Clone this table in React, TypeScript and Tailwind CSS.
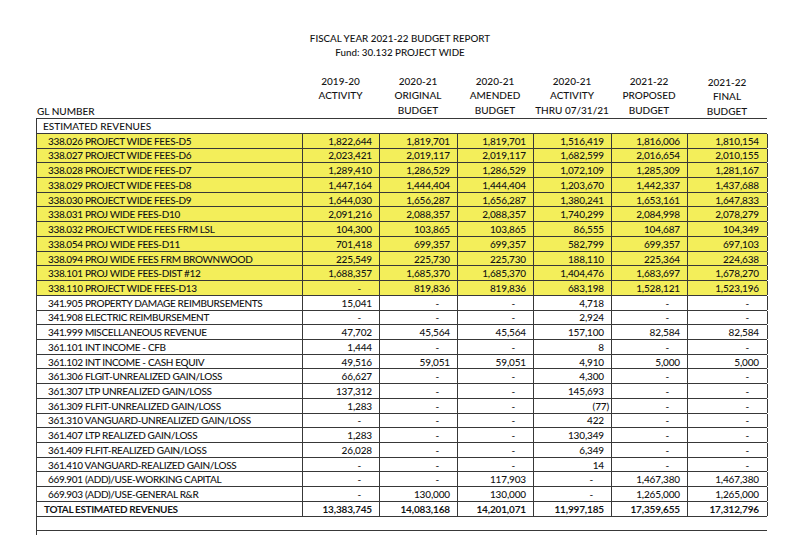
import React from "react";

type Row = { gl: string; v: string[]; yellow?: boolean; bold?: boolean };

const yellowRows: Row[] = [
  { gl: "338.026 PROJECT WIDE FEES-D5", v: ["1,822,644", "1,819,701", "1,819,701", "1,516,419", "1,816,006", "1,810,154"] },
  { gl: "338.027 PROJECT WIDE FEES-D6", v: ["2,023,421", "2,019,117", "2,019,117", "1,682,599", "2,016,654", "2,010,155"] },
  { gl: "338.028 PROJECT WIDE FEES-D7", v: ["1,289,410", "1,286,529", "1,286,529", "1,072,109", "1,285,309", "1,281,167"] },
  { gl: "338.029 PROJECT WIDE FEES-D8", v: ["1,447,164", "1,444,404", "1,444,404", "1,203,670", "1,442,337", "1,437,688"] },
  { gl: "338.030 PROJECT WIDE FEES-D9", v: ["1,644,030", "1,656,287", "1,656,287", "1,380,241", "1,653,161", "1,647,833"] },
  { gl: "338.031 PROJ WIDE FEES-D10", v: ["2,091,216", "2,088,357", "2,088,357", "1,740,299", "2,084,998", "2,078,279"] },
  { gl: "338.032 PROJECT WIDE FEES FRM LSL", v: ["104,300", "103,865", "103,865", "86,555", "104,687", "104,349"] },
  { gl: "338.054 PROJ WIDE FEES-D11", v: ["701,418", "699,357", "699,357", "582,799", "699,357", "697,103"] },
  { gl: "338.094 PROJ WIDE FEES FRM BROWNWOOD", v: ["225,549", "225,730", "225,730", "188,110", "225,364", "224,638"] },
  { gl: "338.101 PROJ WIDE FEES-DIST #12", v: ["1,688,357", "1,685,370", "1,685,370", "1,404,476", "1,683,697", "1,678,270"] },
  { gl: "338.110 PROJECT WIDE FEES-D13", v: ["-", "819,836", "819,836", "683,198", "1,528,121", "1,523,196"] },
];

const whiteRows: Row[] = [
  { gl: "341.905 PROPERTY DAMAGE REIMBURSEMENTS", v: ["15,041", "-", "-", "4,718", "-", "-"] },
  { gl: "341.908 ELECTRIC REIMBURSEMENT", v: ["-", "-", "-", "2,924", "-", "-"] },
  { gl: "341.999 MISCELLANEOUS REVENUE", v: ["47,702", "45,564", "45,564", "157,100", "82,584", "82,584"] },
  { gl: "361.101 INT INCOME - CFB", v: ["1,444", "-", "-", "8", "-", "-"] },
  { gl: "361.102 INT INCOME - CASH EQUIV", v: ["49,516", "59,051", "59,051", "4,910", "5,000", "5,000"] },
  { gl: "361.306 FLGIT-UNREALIZED GAIN/LOSS", v: ["66,627", "-", "-", "4,300", "-", "-"] },
  { gl: "361.307 LTP UNREALIZED GAIN/LOSS", v: ["137,312", "-", "-", "145,693", "-", "-"] },
  { gl: "361.309 FLFIT-UNREALIZED GAIN/LOSS", v: ["1,283", "-", "-", "(77)", "-", "-"] },
  { gl: "361.310 VANGUARD-UNREALIZED GAIN/LOSS", v: ["-", "-", "-", "422", "-", "-"] },
  { gl: "361.407 LTP REALIZED GAIN/LOSS", v: ["1,283", "-", "-", "130,349", "-", "-"] },
  { gl: "361.409 FLFIT-REALIZED GAIN/LOSS", v: ["26,028", "-", "-", "6,349", "-", "-"] },
  { gl: "361.410 VANGUARD-REALIZED GAIN/LOSS", v: ["-", "-", "-", "14", "-", "-"] },
  { gl: "669.901 (ADD)/USE-WORKING CAPITAL", v: ["-", "-", "117,903", "-", "1,467,380", "1,467,380"] },
  { gl: "669.903 (ADD)/USE-GENERAL R&R", v: ["-", "130,000", "130,000", "-", "1,265,000", "1,265,000"] },
];

const totalRow: Row = {
  gl: "TOTAL ESTIMATED REVENUES",
  v: ["13,383,745", "14,083,168", "14,201,071", "11,997,185", "17,359,655", "17,312,796"],
  bold: true,
};

const COLS = "grid grid-cols-[266px_77px_78px_76px_78px_76px_80px]";

function ValueCell({ val, last }: { val: string; last?: boolean }) {
  let pad = "pr-[7px]";
  if (val === "-") pad = "pr-[18px]";
  else if (val.startsWith("(")) pad = "pr-[2px]";
  if (last) pad = "pr-[8px]";
  return (
    <div className={`flex items-center justify-end border-r border-[#383838] tracking-[-0.15px] ${pad}`}>
      {val}
    </div>
  );
}

function DataRow({ row, yellow }: { row: Row; yellow?: boolean }) {
  return (
    <div
      className={`${COLS} h-[14.72px] border-b border-l border-[#383838] leading-none ${
        yellow ? "bg-[#f3ee5a]" : "bg-white"
      } ${row.bold ? "font-bold" : "font-medium"}`}
    >
      <div
        className={`flex items-center whitespace-nowrap border-r border-[#383838] tracking-[-0.35px] ${
          row.bold ? "pl-[7px]" : "pl-[11px]"
        }`}
      >
        {row.gl}
      </div>
      {row.v.map((val, i) => (
        <ValueCell key={i} val={val} last={i === 5 && val !== "-"} />
      ))}
    </div>
  );
}

export default function App() {
  return (
    <div
      className="relative h-[535px] w-[800px] overflow-hidden bg-white font-medium text-[#141414]"
      style={{ fontFamily: "Lato, 'Open Sans', sans-serif" }}
    >
      <div className="pt-[31px] text-center text-[9.8px] leading-[14px]">
        <div>FISCAL YEAR 2021-22 BUDGET REPORT</div>
        <div>Fund: 30.132 PROJECT WIDE</div>
      </div>

      <div className="ml-[36px] mt-[15px] text-[10px]">
        <div className={`${COLS} leading-[14.3px]`}>
          <div className="flex items-end pl-[1px]">GL NUMBER</div>
          <div className="text-center">
            <div>2019-20</div>
            <div>ACTIVITY</div>
          </div>
          <div className="text-center">
            <div>2020-21</div>
            <div>ORIGINAL</div>
            <div>BUDGET</div>
          </div>
          <div className="text-center">
            <div>2020-21</div>
            <div>AMENDED</div>
            <div>BUDGET</div>
          </div>
          <div className="text-center">
            <div>2020-21</div>
            <div>ACTIVITY</div>
            <div>THRU 07/31/21</div>
          </div>
          <div className="text-center">
            <div>2021-22</div>
            <div>PROPOSED</div>
            <div>BUDGET</div>
          </div>
          <div className="pt-[1px] text-center">
            <div>2021-22</div>
            <div>FINAL</div>
            <div>BUDGET</div>
          </div>
        </div>

        <div className="w-[731px]">
          <div className="flex h-[16px] items-center border-b border-l border-t border-[#383838] pl-[6px] leading-none">
            ESTIMATED REVENUES
          </div>
          {yellowRows.map((r) => (
            <DataRow key={r.gl} row={r} yellow />
          ))}
          {whiteRows.map((r) => (
            <DataRow key={r.gl} row={r} />
          ))}
          <DataRow row={totalRow} />
          <div className="h-[14px] border-b-[1.5px] border-l border-[#383838]" />
          <div className="h-[14px] border-l border-[#383838] pl-[6px] pt-[3px] leading-none">
            APPROPRIATIONS
          </div>
        </div>
      </div>
    </div>
  );
}
